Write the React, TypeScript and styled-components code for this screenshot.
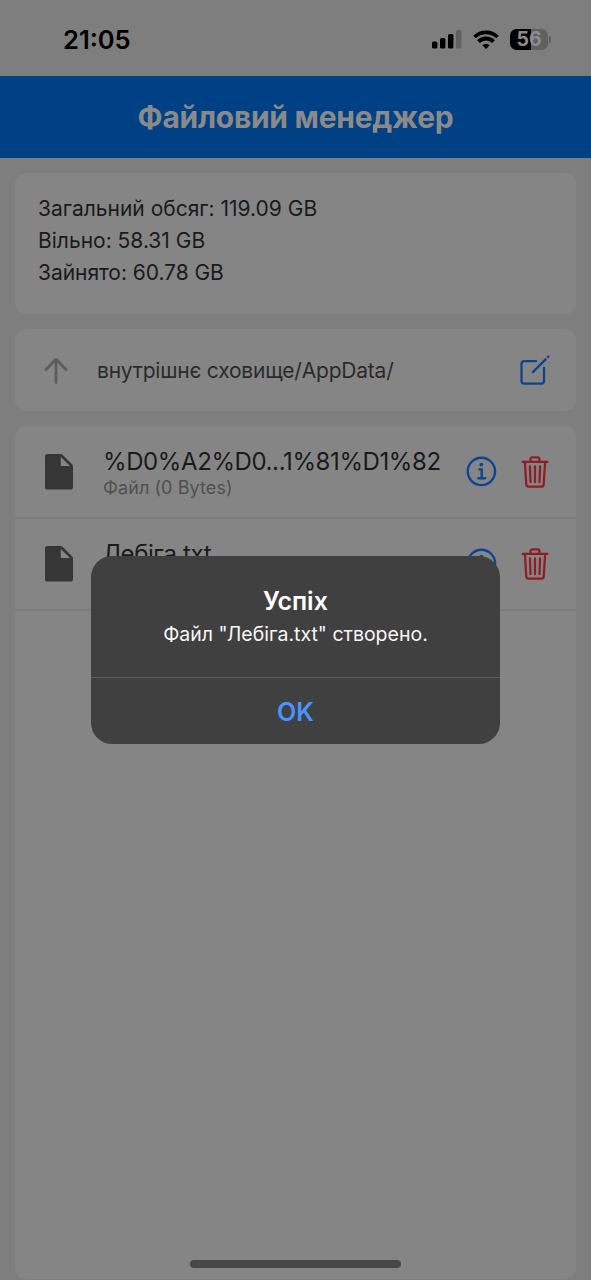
import React from "react";
import styled, { createGlobalStyle } from "styled-components";
import { IoCreateOutline, IoInformationCircleOutline, IoTrashOutline } from "react-icons/io5";

const GlobalStyle = createGlobalStyle`
  * { box-sizing: border-box; }
  body { margin: 0; background: #7e7e7e; font-family: Inter, "Noto Sans", sans-serif; }
`;

const Screen = styled.div`
  position: relative;
  display: flex;
  flex-direction: column;
  width: 591px;
  height: 1280px;
  overflow: hidden;
  background: #7e7e7e;
`;

const StatusBar = styled.div`
  display: flex;
  justify-content: space-between;
  align-items: center;
  flex: none;
  height: 76px;
  padding: 3px 40px 0 63px;
`;

const Text = styled.span<{ $size: number; $track?: number; $color?: string; $weight?: number; $line?: number }>`
  display: block;
  white-space: nowrap;
  font-size: ${(p) => p.$size}px;
  letter-spacing: ${(p) => p.$track ?? 0}px;
  color: ${(p) => p.$color ?? "#1a1a1a"};
  font-weight: ${(p) => p.$weight ?? 400};
  line-height: ${(p) => (p.$line ? `${p.$line}px` : "normal")};
`;

const StatusIcons = styled.div`
  display: flex;
  align-items: center;
`;

const SignalIcon = styled.svg`
  margin: 0 11px 1px 0;
`;

const WifiIcon = styled.svg`
  margin: 0 11px 1px 0;
`;

const Battery = styled.div`
  display: flex;
  align-items: center;
  justify-content: center;
  width: 38px;
  height: 21px;
  border-radius: 6.5px;
  background: linear-gradient(to right, #000 0 21.5px, #606060 21.5px);
`;

const BatteryTip = styled.div`
  width: 2px;
  height: 7px;
  margin-left: 1px;
  border-radius: 0 2px 2px 0;
  background: #606060;
`;

const Header = styled.header`
  display: flex;
  align-items: center;
  justify-content: center;
  flex: none;
  height: 82px;
  background: #004085;
`;

const Content = styled.main`
  display: flex;
  flex-direction: column;
  flex: 1;
  gap: 15px;
  padding: 15px 15px 0;
`;

const Card = styled.section`
  border-radius: 11px;
  background: #858585;
`;

const StorageCard = styled(Card)`
  height: 141px;
  padding: 20px 23px;
`;

const PathCard = styled(Card)`
  display: flex;
  align-items: center;
  height: 82px;
  padding: 0 23px;
`;

const PathLabel = styled.div`
  flex: 1;
  padding-left: 23px;
`;

const ListCard = styled(Card)`
  height: 853px;
  padding-top: 1px;
`;

const FileRow = styled.div`
  display: flex;
  align-items: center;
  height: 92px;
  padding: 0 23px 0 26px;
  border-bottom: 2px solid #7c7c7c;
`;

const FileInfo = styled.div`
  flex: 1;
  padding: 2px 0 0 25px;
`;

const Actions = styled.div`
  display: flex;
  align-items: center;
  gap: 16px;
`;

const Overlay = styled.div`
  position: absolute;
  inset: 0;
  display: flex;
  justify-content: center;
  align-items: flex-start;
  padding-top: 556px;
`;

const Dialog = styled.div`
  width: 409px;
  height: 188px;
  border-radius: 21px;
  background: #404040;
  text-align: center;
`;

const DialogBody = styled.div`
  height: 122px;
  padding-top: 29px;
  border-bottom: 1px solid #5d5d5d;
`;

const DialogButton = styled.button`
  display: flex;
  align-items: center;
  justify-content: center;
  width: 100%;
  height: 66px;
  padding: 2px 0 0;
  border: 0;
  background: none;
  font-family: inherit;
`;

const HomeIndicator = styled.div`
  position: absolute;
  left: 190px;
  bottom: 12px;
  width: 211px;
  height: 8px;
  border-radius: 4px;
  background: #484848;
`;

const DocumentIcon = () => (
  <svg width="37" height="40" viewBox="0 0 37 40">
    <path
      fill="#363636"
      fillRule="evenodd"
      d="M6.600 2H19.400Q20.800 2 21.800 3L31 12.200Q32 13.200 32 14.600V35a2.600 2.600 0 0 1-2.600 2.600H6.600A2.600 2.600 0 0 1 4 35V4.600A2.600 2.600 0 0 1 6.600 2ZM19.800 4.900V14H29Z"
    />
  </svg>
);

const files = ["%D0%A2%D0...1%81%D1%82", "Лебіга.txt"];

export default function App() {
  return (
    <>
      <GlobalStyle />
      <Screen>
        <StatusBar>
          <Text $size={25.5} $weight={600} $color="#000">21:05</Text>
          <StatusIcons>
            <SignalIcon width="30" height="20" viewBox="0 0 30 20">
              <rect x="0" y="12.500" width="5.400" height="7" rx="1.600" />
              <rect x="8" y="9" width="5.400" height="10.500" rx="1.600" />
              <rect x="16" y="5" width="5.400" height="14.500" rx="1.600" />
              <rect x="24" y="1" width="5.400" height="18.500" rx="1.600" fill="#606060" />
            </SignalIcon>
            <WifiIcon width="26" height="19" viewBox="0 0 26 19" fill="none" stroke="#000" strokeWidth="3.800">
              <path d="M1.500 7A16.500 16.500 0 0 1 24.500 7" />
              <path d="M5.500 11.600A10.600 10.600 0 0 1 20.500 11.600" />
              <path d="M9.300 15.300A5.200 5.200 0 0 1 16.700 15.300L13 19Z" fill="#000" stroke="none" />
            </WifiIcon>
            <Battery>
              <Text $size={19.5} $weight={700} $color="#8c8c8c" $line={21}>56</Text>
            </Battery>
            <BatteryTip />
          </StatusIcons>
        </StatusBar>
        <Header>
          <Text $size={30} $weight={700} $color="#8a8a8a" $track={-0.27}>Файловий менеджер</Text>
        </Header>
        <Content>
          <StorageCard>
            <Text $size={21} $line={32}>Загальний обсяг: 119.09 GB</Text>
            <Text $size={21} $line={32}>Вільно: 58.31 GB</Text>
            <Text $size={21} $line={32} $track={-0.05}>Зайнято: 60.78 GB</Text>
          </StorageCard>
          <PathCard>
            <svg width="36" height="36" viewBox="0 0 36 36" fill="none" stroke="#5d5d5d" strokeWidth="2.800" strokeLinecap="round" strokeLinejoin="round">
              <path d="M8 17.500 18 7.300 28 17.500M18 8V30.500" />
            </svg>
            <PathLabel>
              <Text $size={21} $color="#2b2b2b" $track={-0.21}>внутрішнє сховище/AppData/</Text>
            </PathLabel>
            <IoCreateOutline size={36} color="#0a4392" />
          </PathCard>
          <ListCard>
            {files.map((name) => (
              <FileRow key={name}>
                <DocumentIcon />
                <FileInfo>
                  <Text $size={24} $line={29} $track={-0.4}>{name}</Text>
                  <Text $size={18} $line={23} $color="#505050" $track={0.08}>Файл (0 Bytes)</Text>
                </FileInfo>
                <Actions>
                  <IoInformationCircleOutline size={38} color="#0c4591" />
                  <IoTrashOutline size={36} color="#8e1e24" />
                </Actions>
              </FileRow>
            ))}
          </ListCard>
        </Content>
        <HomeIndicator />
        <Overlay>
          <Dialog role="alertdialog">
            <DialogBody>
              <Text $size={25} $line={33} $weight={600} $color="#fff">Успіх</Text>
              <Text $size={19.5} $line={32} $color="#f7f7f7">Файл "Лебіга.txt" створено.</Text>
            </DialogBody>
            <DialogButton>
              <Text $size={25} $weight={600} $color="#4793ff">OK</Text>
            </DialogButton>
          </Dialog>
        </Overlay>
      </Screen>
    </>
  );
}
